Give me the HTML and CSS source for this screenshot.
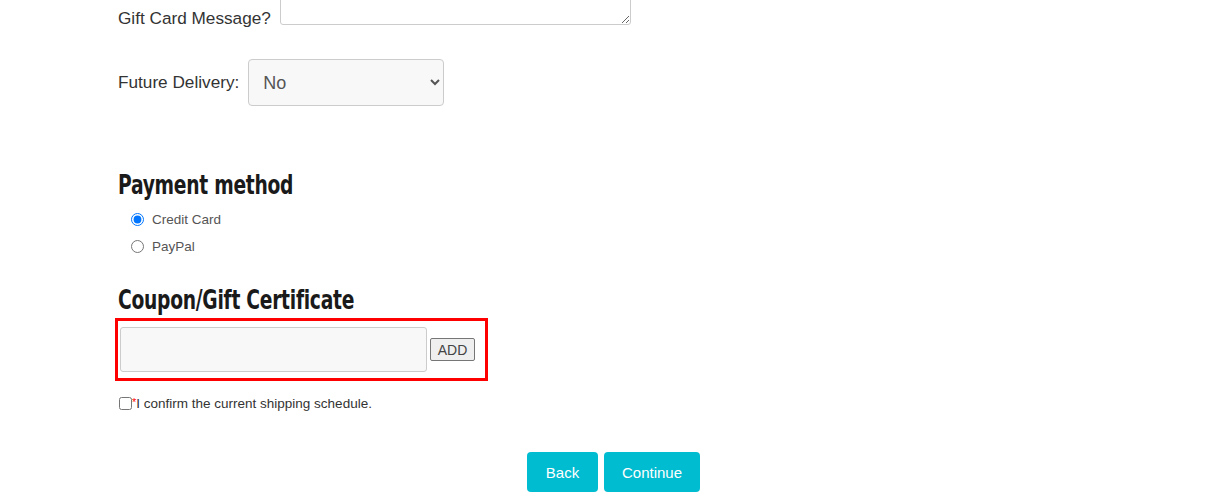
FILE: index.html
```html
<!DOCTYPE html>
<html lang="en">
<head>
  <meta charset="UTF-8">
  <meta name="viewport" content="width=device-width, initial-scale=1.0">
  <title>Checkout</title>
  <link rel="stylesheet" href="styles.css">
</head>
<body>
  <div class="checkout">
    <div class="row row-gift">
      <label for="giftMsg">Gift Card Message?</label>
      <textarea id="giftMsg" class="gift-msg"></textarea>
    </div>

    <div class="row row-delivery">
      <label for="future">Future Delivery:</label>
      <select id="future" class="select">
        <option>No</option>
        <option>Yes</option>
      </select>
    </div>

    <h2 class="section-title payment-title">Payment method</h2>
    <div class="radios">
      <label class="radio"><input type="radio" name="pay" checked> Credit Card</label>
      <label class="radio"><input type="radio" name="pay"> PayPal</label>
    </div>

    <h2 class="section-title">Coupon/Gift Certificate</h2>
    <div class="coupon-box">
      <input type="text" class="coupon-input">
      <button class="btn-add">ADD</button>
    </div>

    <label class="confirm"><input type="checkbox"><span class="req">*</span>I confirm the current shipping schedule.</label>

    <div class="actions">
      <button class="btn-main">Back</button>
      <button class="btn-main btn-continue">Continue</button>
    </div>
  </div>
</body>
</html>
```

FILE: styles.css
```css
body {
  margin: 0;
  background: #fff;
  font-family: 'Liberation Sans', Arial, sans-serif;
  color: #333;
}
.checkout {
  max-width: 994px;
  margin: 0 auto;
}
.row {
  display: flex;
  font-size: 17.2px;
  color: #333;
}
.row label {
  margin-right: 9px;
}
.row-gift {
  align-items: flex-end;
  margin-top: -16px;
}
.gift-msg {
  width: 349px;
  height: 39px;
  border: 1px solid #ccc;
  border-radius: 3px;
  background: #fff;
  padding: 0;
  margin: 0 0 4px 0;
}
.row-delivery {
  align-items: center;
  margin-top: 30px;
}
.select {
  width: 196px;
  height: 47px;
  font-family: 'Liberation Sans', Arial, sans-serif;
  font-size: 18px;
  color: #555;
  background: #f8f8f8;
  border: 1px solid #ccc;
  border-radius: 4px;
  padding: 0 10px;
}
.section-title {
  font-family: 'DejaVu Sans', sans-serif;
  font-weight: bold;
  font-size: 26px;
  line-height: 30px;
  color: #1a1a1a;
  margin: 0;
  letter-spacing: -0.4px;
  transform: scaleX(0.72);
  transform-origin: left center;
}
.payment-title {
  margin-top: 64px;
}
.radios {
  margin: 6px 0 25px 13px;
  font-size: 13.5px;
  color: #555;
}
.radio {
  display: flex;
  align-items: center;
  height: 27px;
}
.radio input {
  margin: 0 8px 0 0;
  width: 13px;
  height: 13px;
}
.coupon-box {
  display: flex;
  align-items: center;
  width: 365px;
  height: 57px;
  border: 3px solid #f00;
  margin: 3px 0 0 -3px;
  padding: 0 0 0 2px;
}
.coupon-input {
  width: 305px;
  height: 43px;
  background: #f8f8f8;
  border: 1px solid #ccc;
  border-radius: 3px;
  padding: 0;
  margin: 0 3px 0 0;
}
.btn-add {
  font-family: 'Liberation Sans', Arial, sans-serif;
  font-size: 14px;
  color: #444;
  background: #efefef;
  border: 1px solid #767676;
  border-radius: 2px;
  width: 45px;
  height: 23px;
  padding: 0;
}
.confirm {
  display: flex;
  align-items: center;
  margin-top: 15px;
  font-size: 13.5px;
  color: #333;
}
.confirm input {
  margin: 0 0 0 1px;
  width: 13px;
  height: 13px;
}
.req {
  color: #f00;
  font-size: 11px;
  align-self: flex-start;
}
.actions {
  display: flex;
  justify-content: center;
  gap: 6px;
  margin-top: 41px;
  padding-right: 3px;
}
.btn-main {
  background: #00bcd0;
  color: #fff;
  border: none;
  border-radius: 4px;
  font-family: 'Liberation Sans', Arial, sans-serif;
  font-size: 15px;
  height: 40px;
  width: 71px;
  padding: 0;
  cursor: pointer;
}
.btn-continue {
  width: 96px;
}
```
